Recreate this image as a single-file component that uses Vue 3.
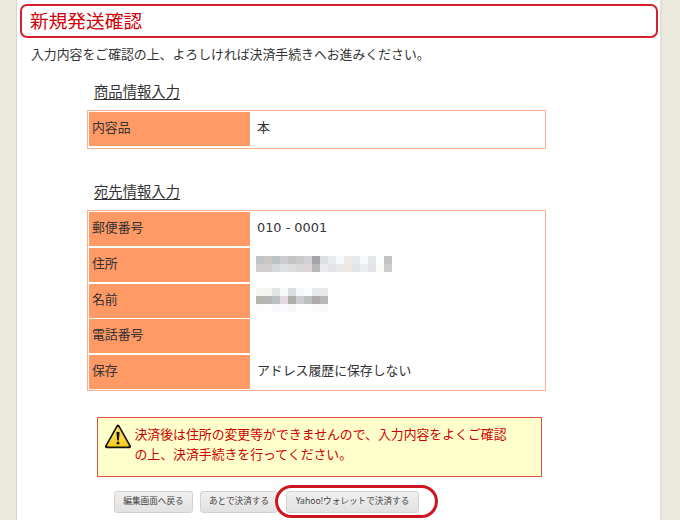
<script setup>
const address = [
  ['#c0c4c4', '#cac8c4', '#bcc2c3', '#cdcdcf', '#c5c5c5', '#c9c9ca', '#d2d2d7', '#a5a5a5', '#dedfe2', '#e9ebed', '#f7f8fb', '#edeae7', '#e8e9ec', '#f8f9f9', '#e4e8e7', '#ffffff', '#c2c2c5'],
  ['#d2ced0', '#d0cccf', '#d4d9da', '#dfe0e3', '#dcdcdc', '#d6d7d8', '#dbd5da', '#b8b8b9', '#ebebed', '#e3e4e7', '#e7e9e9', '#eee8e3', '#e3e4e7', '#eaeeed', '#e1e3e4', '#fbfbf8', '#cdcdd0'],
]
const fullName = [
  ['#f5f5f4', '#f3f3f1', '#e0e4e3', '#f8f8f8', '#dcdedd', '#f4f6f9', '#fbfcff', '#e7e8e8', '#e9e9ea'],
  ['#b7b5af', '#b7b7b8', '#b9c1c4', '#e1dbe0', '#adada9', '#cdcdd1', '#bdc0c1', '#adaba9', '#b8b8ba'],
  ['#fcfcfc', '#fefefe', '#f8f9fc', '#fafaff', '#f5f7f8', '#fefefd', '#fefefd', '#fbfbfb', '#f9f9f9'],
]
const rows = [
  { label: '郵便番号', value: '010 - 0001' },
  { label: '住所', mosaic: address },
  { label: '名前', mosaic: fullName },
  { label: '電話番号', value: '' },
  { label: '保存', value: 'アドレス履歴に保存しない' },
]
</script>

<template>
  <div class="page">
    <main class="panel">
      <h1>新規発送確認</h1>
      <p class="intro">入力内容をご確認の上、よろしければ決済手続きへお進みください。</p>

      <h2>商品情報入力</h2>
      <dl class="sheet single">
        <dt>内容品</dt>
        <dd>本</dd>
      </dl>

      <h2 class="second">宛先情報入力</h2>
      <dl class="sheet">
        <template v-for="row in rows" :key="row.label">
          <dt>{{ row.label }}</dt>
          <dd>
            <div v-if="row.mosaic" class="mosaic">
              <div v-for="(line, i) in row.mosaic" :key="i" class="line">
                <i v-for="(c, j) in line" :key="j" :style="{ background: c }"></i>
              </div>
            </div>
            <span v-else class="value">{{ row.value }}</span>
          </dd>
        </template>
      </dl>

      <div class="notice">
        <svg class="warn" viewBox="0 0 28 26" width="28" height="26">
          <defs>
            <linearGradient id="amber" x1="0" y1="0" x2="0" y2="1">
              <stop offset="0" stop-color="#ffe45c" />
              <stop offset="1" stop-color="#f8cc20" />
            </linearGradient>
          </defs>
          <path d="M14 2.4 25.4 22.5H2.6Z" fill="#111" stroke="#111" stroke-width="3.4" stroke-linejoin="round" />
          <path d="M14 3.5 24.2 21.7H3.8Z" fill="url(#amber)" stroke="url(#amber)" stroke-width="1.4" stroke-linejoin="round" />
          <path d="M12.4 8.3Q14 7 15.6 8.3L14.8 16.4H13.2Z" fill="#111" />
          <circle cx="14" cy="19" r="1.5" fill="#111" />
        </svg>
        <p>決済後は住所の変更等ができませんので、入力内容をよくご確認<br />の上、決済手続きを行ってください。</p>
      </div>

      <div class="actions">
        <button class="back">編集画面へ戻る</button>
        <button class="later">あとで決済する</button>
        <span class="target"><button class="wallet">Yahoo!ウォレットで決済する</button></span>
      </div>
    </main>
  </div>
</template>

<style>
body {
  margin: 0;
  overflow: hidden;
}
</style>

<style scoped>
* {
  box-sizing: border-box;
}
.page {
  height: 520px;
  overflow: hidden;
  padding: 0 18px 0 16px;
  background: #ebe8dc;
  font-family: 'Noto Sans', 'Noto Sans CJK JP', sans-serif;
  font-size: 12.87px;
  color: #333;
}
.panel {
  height: 520px;
  padding: 4px 2px 0 3px;
  background: #fff;
  border-left: 1px solid #d4d4d2;
  border-right: 2px solid #e0dfdc;
}
h1, h2, p, dl, dt, dd {
  margin: 0;
  font-weight: 400;
}
h1 {
  height: 34px;
  width: 638px;
  padding-left: 8px;
  border: 2px solid #d6202a;
  border-radius: 7px;
  font-size: 18.7px;
  line-height: 30px;
  color: #d00009;
}
.intro {
  margin: 6px 0 0 11px;
  line-height: 20px;
}
h2 {
  margin: 18px 0 0 74px;
  font-size: 14.35px;
  line-height: 20px;
  height: 28px;
  text-decoration: underline;
  text-decoration-thickness: 1px;
  text-underline-offset: 2px;
}
h2.second {
  margin-top: 33px;
}
.sheet {
  display: grid;
  grid-template-columns: 161px 1fr;
  grid-auto-rows: 34px;
  row-gap: 1.75px;
  width: 459px;
  height: 181px;
  margin-left: 67px;
  padding: 1px;
  border: 1px solid #ffb08a;
}
.sheet.single {
  height: 39px;
}
dt {
  padding-left: 3px;
  background: #ff9966;
  line-height: 30px;
}
dd {
  padding-left: 7px;
  line-height: 30px;
}
.value {
  font-family: 'DejaVu Sans', 'Noto Sans CJK JP', sans-serif;
}
.mosaic {
  margin: 8px 0 0 -1px;
}
dt:nth-of-type(3) + dd .mosaic {
  margin-top: 4px;
}
.line {
  display: flex;
  height: 8px;
}
.line i {
  width: 8px;
  height: 8px;
}
.notice {
  display: flex;
  width: 445px;
  height: 60px;
  margin: 26px 0 0 77px;
  padding: 6px 0 0 6px;
  background: #ffffcc;
  border: 1px solid #e0503f;
  color: #cc0000;
}
.warn {
  flex: none;
  margin-right: 2.5px;
}
.notice p {
  padding-top: 1px;
  line-height: 19.5px;
  white-space: nowrap;
}
.actions {
  display: flex;
  align-items: center;
  height: 33px;
  margin: 8px 0 0 94px;
}
button {
  height: 22px;
  padding: 0;
  border: 1px solid #d2d2d2;
  border-radius: 3px;
  background: linear-gradient(#efefef, #e2e2e2);
  font: inherit;
  font-size: 8.65px;
  line-height: 19px;
  color: #444;
  white-space: nowrap;
}
.back {
  width: 79px;
}
.later {
  width: 78px;
  margin-left: 7px;
}
.target {
  display: flex;
  align-items: center;
  position: relative;
  width: 163px;
  height: 33px;
  margin-left: -3px;
  padding-left: 8px;
  border: 3px solid #cf1422;
  border-radius: 17px;
  background: #fff;
}
.wallet {
  width: 133px;
}
</style>
